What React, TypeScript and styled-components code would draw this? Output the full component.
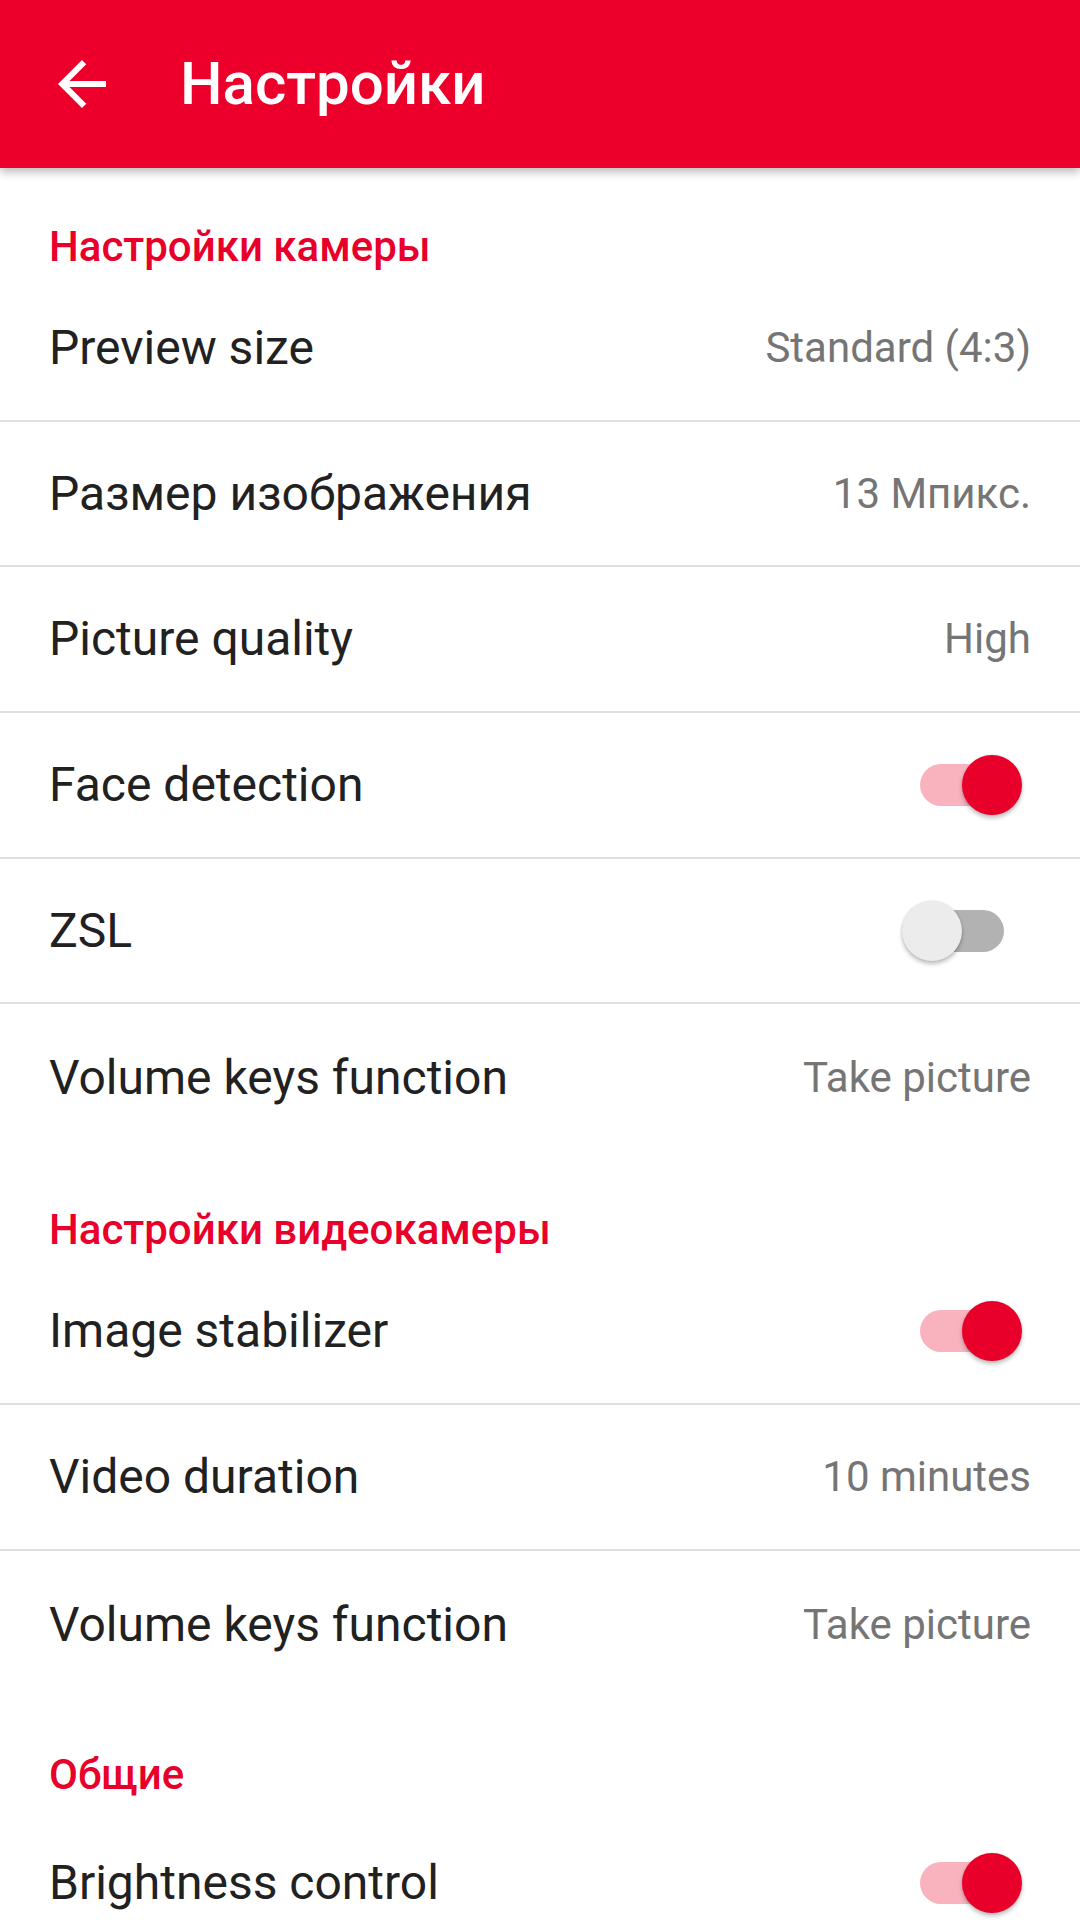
import React from "react";
import styled, { createGlobalStyle } from "styled-components";

const Global = createGlobalStyle`
  html, body { margin: 0; padding: 0; background: #ffffff; }
  body { width: 1080px; height: 1920px; overflow: hidden; font-family: Roboto, "Noto Sans", "Liberation Sans", sans-serif; }
  * { box-sizing: border-box; }
`;

const Screen = styled.div`
  width: 1080px;
  height: 1920px;
  background: #ffffff;
  display: flex;
  flex-direction: column;
  overflow: hidden;
`;

const Toolbar = styled.header`
  position: relative;
  z-index: 2;
  height: 168px;
  flex: none;
  background: #ec002b;
  display: flex;
  align-items: center;
  padding-left: 46px;
  gap: 62px;
  box-shadow: 0 4px 9px rgba(0, 0, 0, 0.28);
`;

const BackButton = styled.button`
  width: 72px;
  height: 72px;
  padding: 0;
  border: none;
  background: transparent;
  display: flex;
  align-items: center;
  justify-content: center;
`;

const Title = styled.h1`
  margin: 0;
  font-family: Roboto, sans-serif;
  font-weight: 500;
  font-size: 60px;
  line-height: 60px;
  color: #ffffff;
`;

const List = styled.div`
  display: flex;
  flex-direction: column;
`;

const Category = styled.div<{ $extra?: number; $top?: number }>`
  padding: ${(p) => p.$top ?? 58}px 49px ${(p) => 8 + (p.$extra ?? 0)}px;
  font-family: Roboto, sans-serif;
  font-weight: 500;
  font-size: 42px;
  line-height: 42px;
  color: #e8002b;
`;

const Row = styled.div<{ $divider?: boolean }>`
  height: ${(p) => (p.$divider ? 145.7 : 148)}px;
  flex: none;
  padding: 0 49px;
  display: flex;
  align-items: center;
  justify-content: space-between;
  border-bottom: ${(p) => (p.$divider ? "2px solid #dfdfdf" : "none")};
`;

const Label = styled.span`
  font-family: Roboto, sans-serif;
  font-size: 48px;
  line-height: 56px;
  color: #212121;
`;

const Value = styled.span`
  font-family: Roboto, sans-serif;
  font-size: 42px;
  line-height: 50px;
  color: #757575;
`;

const SwitchBox = styled.div`
  position: relative;
  width: 120px;
  height: 60px;
  margin-right: 9px;
  flex: none;
`;

const Track = styled.div<{ $on: boolean }>`
  position: absolute;
  left: 18px;
  top: 9px;
  width: 84px;
  height: 42px;
  border-radius: 21px;
  background: ${(p) => (p.$on ? "#f9b3bf" : "#b2b2b2")};
`;

const Thumb = styled.div<{ $on: boolean }>`
  position: absolute;
  top: 0;
  left: ${(p) => (p.$on ? 60 : 0)}px;
  width: 60px;
  height: 60px;
  border-radius: 50%;
  background: ${(p) => (p.$on ? "#e8002a" : "#ececec")};
  box-shadow: 0 3px 4px rgba(0, 0, 0, 0.25), 0 0 2px rgba(0, 0, 0, 0.12);
`;

const Toggle = ({ on }: { on: boolean }) => (
  <SwitchBox>
    <Track $on={on} />
    <Thumb $on={on} />
  </SwitchBox>
);

type Item = { label: string; value?: string; toggle?: boolean };

const Section = ({
  title,
  items,
  extra,
  top,
}: {
  title: string;
  items: Item[];
  extra?: number;
  top?: number;
}) => (
  <>
    <Category $extra={extra} $top={top}>
      {title}
    </Category>
    {items.map((it, i) => (
      <Row key={i} $divider={i < items.length - 1}>
        <Label>{it.label}</Label>
        {it.toggle !== undefined ? <Toggle on={it.toggle} /> : <Value>{it.value}</Value>}
      </Row>
    ))}
  </>
);

export default function App() {
  return (
    <Screen>
      <Global />
      <Toolbar>
        <BackButton aria-label="back">
          <svg width="72" height="72" viewBox="0 0 24 24">
            <path fill="#ffffff" d="M20 11H7.83l5.59-5.59L12 4l-8 8 8 8 1.41-1.41L7.83 13H20v-2z" />
          </svg>
        </BackButton>
        <Title>Настройки</Title>
      </Toolbar>
      <List>
        <Section
          title="Настройки камеры"
          items={[
            { label: "Preview size", value: "Standard (4:3)" },
            { label: "Размер изображения", value: "13 Мпикс." },
            { label: "Picture quality", value: "High" },
            { label: "Face detection", toggle: true },
            { label: "ZSL", toggle: false },
            { label: "Volume keys function", value: "Take picture" },
          ]}
        />
        <Section
          title="Настройки видеокамеры"
          top={57}
          items={[
            { label: "Image stabilizer", toggle: true },
            { label: "Video duration", value: "10 minutes" },
            { label: "Volume keys function", value: "Take picture" },
          ]}
        />
        <Section title="Общие" top={55} extra={5} items={[{ label: "Brightness control", toggle: true }]} />
      </List>
    </Screen>
  );
}
